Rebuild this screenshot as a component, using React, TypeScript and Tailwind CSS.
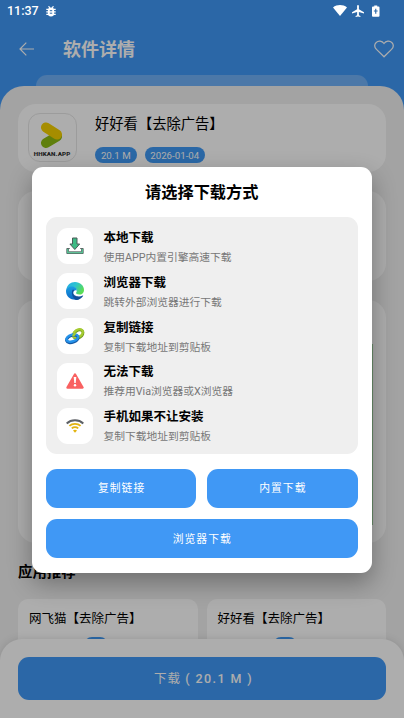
import React from "react";

const cjk = "font-['Roboto','Noto_Sans_CJK_SC',sans-serif]";

function DownloadIcon() {
  return (
    <svg viewBox="0 0 18 18" className="size-[18px]">
      <path d="M6.500 1h4.500v6h2.700L8.800 12.500 3.900 7h2.600z" fill="#3dba84" stroke="#4c5a58" strokeWidth="1" />
      <path d="M.8 11.500h3M.8 11.500v5h16.400v-5h-3M2.400 12v2.800h13.200V12" fill="none" stroke="#4c5a58" strokeWidth=".9" />
      <path d="M1.700 12v3.700h14.600V12" fill="none" stroke="#3dba84" strokeWidth="1.100" />
    </svg>
  );
}

function EdgeIcon() {
  return (
    <svg viewBox="0 0 24 24" className="size-[18px]">
      <defs>
        <linearGradient id="edgeTop" x1="0" x2="1" y1="0" y2=".5">
          <stop offset="0" stopColor="#25a9e4" />
          <stop offset=".5" stopColor="#2bc3d2" />
          <stop offset="1" stopColor="#5bdd55" />
        </linearGradient>
        <linearGradient id="edgeLeft" x1="0" x2="0" y1="0" y2="1">
          <stop offset="0" stopColor="#1b9de2" />
          <stop offset="1" stopColor="#0b68c5" />
        </linearGradient>
      </defs>
      <path d="M.3 10.5C1.400 4 6 0 12 0c7 0 12 5 12 10.500 0 4-3 6.300-6.200 6.300-3 0-4.400-1.100-4.400-2 0-.8 1-1.200 1-3 0-2.700-2.700-5-6-5-3.500 0-6.300 1.300-8.100 3.700z" fill="url(#edgeTop)" />
      <path d="M0 12c0-3.500 3.500-6 8-6 4.500 0 6.600 3.200 6.500 5.500-2-1.300-4.900.2-5 3.500-.1 4 3.800 7.200 7.500 8C9 25.500 0 21 0 12z" fill="url(#edgeLeft)" />
      <path d="M8.600 10.500c-2.300 5.500 1 11.500 5 13.400 4 0 7.400-2.400 9.200-5.400.2-.5-.2-.7-.6-.5-5 2.600-12.500.8-12.700-4 0-1.600.8-2.500 1.800-3.200-.8-.5-1.800-.8-2.700-.3z" fill="#124f9c" />
    </svg>
  );
}

function ChainIcon() {
  return (
    <svg viewBox="0 0 20 20" className="size-5" fill="none">
      <ellipse cx="13.200" cy="8.200" rx="5.300" ry="3.600" transform="rotate(-35 13.200 8.200)" stroke="#719b20" strokeWidth="2.800" />
      <ellipse cx="13" cy="7.400" rx="5.300" ry="3.600" transform="rotate(-35 13 7.400)" stroke="#a5cb30" strokeWidth="2.400" />
      <ellipse cx="7.300" cy="13" rx="6" ry="3.400" transform="rotate(-18 7.300 13)" stroke="#1459a5" strokeWidth="2.800" />
      <ellipse cx="7.300" cy="12" rx="6" ry="3.400" transform="rotate(-18 7.300 12)" stroke="#2492ea" strokeWidth="2.400" />
      <path d="M8.200 10.500q.2-2 2.300-3.500" stroke="#a5cb30" strokeWidth="2.400" />
    </svg>
  );
}

function WarningIcon() {
  return (
    <svg viewBox="0 0 18 18" className="size-[18px]">
      <path d="M9 2.500l7.500 13H1.500z" fill="#f96161" stroke="#f96161" strokeWidth="2.400" strokeLinejoin="round" />
      <path d="M7.700 5h2.600l-.6 6H8.300z" fill="#fff" />
      <circle cx="9" cy="13.300" r="1.200" fill="#fff" />
    </svg>
  );
}

function WifiIcon() {
  return (
    <svg viewBox="0 0 18 18" className="size-[18px]" fill="none">
      <path d="M.7 6.400C5.200 2.300 12.800 2.300 17.300 6.400" stroke="#5c6065" strokeWidth="2" />
      <path d="M3.400 8.900c3-2.700 8.200-2.700 11.200 0M5.800 11.400c1.800-1.600 4.600-1.600 6.400 0" stroke="#e3b410" strokeWidth="1.900" />
      <path d="M7 13.500c1.200-.9 2.800-.9 4 0l-2 2.200z" fill="#e3b410" />
    </svg>
  );
}

const options = [
  { title: "本地下载", note: "使用APP内置引擎高速下载", icon: <DownloadIcon /> },
  { title: "浏览器下载", note: "跳转外部浏览器进行下载", icon: <EdgeIcon /> },
  { title: "复制链接", note: "复制下载地址到剪贴板", icon: <ChainIcon /> },
  { title: "无法下载", note: "推荐用Via浏览器或X浏览器", icon: <WarningIcon /> },
  { title: "手机如果不让安装", note: "复制下载地址到剪贴板", icon: <WifiIcon /> },
];

function StatusBar() {
  return (
    <div className="absolute inset-x-0 top-0 flex h-[22px] items-center text-white">
      <span className="ml-[7px] mt-px w-[33px] text-[12.500px] font-medium leading-none">11:37</span>
      <svg viewBox="0 0 10 11" className="ml-[5.500px] h-[11px] w-[10px]">
        <path d="M2.500 .3L4 1.800M7.500 .3L6 1.800M.3 3.400h9.400M.3 5.900h9.400M.3 8.400h9.400" stroke="#fff" strokeWidth="1.200" />
        <rect x="1.900" y="1.400" width="6.200" height="9.200" rx="3" fill="#fff" />
        <path d="M3.800 4.700h2.400M3.800 7.200h2.400" stroke="#2c68a8" strokeWidth="1" />
      </svg>
      <div className="-mt-px ml-auto mr-[23.500px] flex items-center">
        <svg viewBox="0 0 14 11" className="h-[11px] w-[14px]">
          <path d="M0 2.400C4-.8 10-.8 14 2.400L7 11z" fill="#fff" />
        </svg>
        <svg viewBox="2 2 20 20" className="ml-[5px] size-[12px]">
          <path fill="#fff" d="M22 16v-2l-8.500-5V3.500a1.500 1.500 0 0 0-3 0V9L2 14v2l8.500-2.500V19L8 20.500V22l4-1 4 1v-1.500L13.500 19v-5.500z" />
        </svg>
        <svg viewBox="0 0 8 12" className="ml-[8px] mr-[1px] h-[12px] w-[7.500px]">
          <path d="M2.400 0h3.200v1.200H7q1 0 1 1V11q0 1-1 1H1q-1 0-1-1V2.200q0-1 1-1h1.400z" fill="#fff" />
          <path d="M4 3.500v5.500M2 6h4" stroke="#2c68a8" strokeWidth="1.200" />
        </svg>
      </div>
    </div>
  );
}

function Pill({ children, className }: { children: React.ReactNode; className: string }) {
  return (
    <span className={`flex h-4 items-center justify-center rounded-full bg-[#409af5] pt-px text-[9.700px] leading-none text-white ${className}`}>
      {children}
    </span>
  );
}

function AppLogo() {
  return (
    <div className="flex size-[49px] flex-col items-center rounded-[12px] border border-[#e6e6e6] pt-[7px]">
      <svg viewBox="0 0 24 28" className="h-[28px] w-[24px]">
        <path d="M6 22l11-6.500" stroke="#8dbb12" strokeWidth="10" strokeLinecap="round" />
        <path d="M6 6.500l11 7" stroke="#f5d000" strokeWidth="10" strokeLinecap="round" />
      </svg>
      <span className="mt-px whitespace-nowrap text-[6.200px] font-black leading-[8px] tracking-[0.150px] text-[#333]">HHKAN.APP</span>
    </div>
  );
}

function Recommendation({ name }: { name: string }) {
  return (
    <div className="h-[90px] rounded-[10px] bg-white px-[11px] pt-[11px]">
      <div className="text-[12.500px] leading-[17px] text-black">{name}</div>
      <div className="ml-[55px] mt-[9.500px] h-4 w-[24px] rounded-full bg-[#409af5]" />
    </div>
  );
}

function ActionButton({ children, className }: { children: React.ReactNode; className: string }) {
  return (
    <button className={`flex h-[39px] items-center justify-center rounded-[11px] bg-[#4098f5] pl-px pt-[3px] text-[10.800px] tracking-[1px] text-white ${className}`}>
      {children}
    </button>
  );
}

export default function App() {
  return (
    <div className={`relative h-[718px] w-[404px] overflow-hidden bg-[#4099f7] ${cjk}`}>
      <div className="flex h-full flex-col">
        <header className="flex h-[75px] items-start pt-[37px] text-white">
          <svg viewBox="0 0 16 14" className="ml-[19px] mt-[4.500px] h-[14px] w-[16px]" fill="none" stroke="currentColor" strokeWidth="1.200">
            <path d="M15 7H1M7.300 .7L1 7l6.300 6.300" />
          </svg>
          <h1 className="ml-[28px] mt-px text-[18px] font-bold leading-[24px]">软件详情</h1>
          <svg viewBox="0 0 20 18" className="ml-auto mr-[10px] mt-[2.500px] h-[18px] w-[20px]" fill="none" stroke="currentColor" strokeWidth="1.200">
            <path d="M10 16.800L2.500 9.400C.3 7 .4 4.300 2.200 2.500 4.400.4 8 .8 10 3.500c2-2.700 5.600-3.100 7.800-1 1.800 1.800 1.900 4.500-.3 6.900z" />
          </svg>
        </header>
        <div className="mx-[36px] h-[11px] shrink-0 rounded-t-[18px] bg-[#70b1f8]" />
        <main className="flex min-h-0 flex-1 flex-col overflow-hidden rounded-t-[24px] bg-[#f0f0f0] px-[18px] pt-[18px]">
          <section className="flex h-[68px] shrink-0 rounded-[18px] bg-white pl-[9.500px] pt-[9px]">
            <AppLogo />
            <div className="ml-[18.500px] pt-[2px]">
              <div className="text-[14.300px] leading-[18px] text-black">好好看【去除广告】</div>
              <div className="mt-[14px] flex gap-[8.500px]">
                <Pill className="w-[41.500px]">20.1 M</Pill>
                <Pill className="w-[59.500px]">2026-01-04</Pill>
              </div>
            </div>
          </section>
          <section className="mt-[19px] h-[90px] shrink-0 rounded-[18px] bg-white" />
          <section className="mt-[19px] h-[243px] shrink-0 rounded-[18px] bg-white pl-[14px] pr-[13px] pt-[44px]">
            <div className="h-[181px] bg-[#9ccf9c]" />
          </section>
          <h2 className="mt-[19px] shrink-0 text-[14.400px] font-bold leading-[22px] text-black">应用推荐</h2>
          <section className="mt-[15px] grid shrink-0 grid-cols-2 gap-[9px]">
            <Recommendation name="网飞猫【去除广告】" />
            <Recommendation name="好好看【去除广告】" />
          </section>
        </main>
      </div>

      <footer className="absolute inset-x-0 bottom-0 h-[79px] rounded-t-[22px] bg-white px-[18px] pt-[18px] shadow-[0_0_8px_rgba(0,0,0,0.12)]">
        <button className="flex h-[43px] w-full items-center justify-center rounded-[11px] bg-[#4099f7] pl-[3px] pt-[2px] text-[12.500px] text-white">
          <span className="tracking-[1.200px]">下载</span>
          <span className="ml-[4px] whitespace-pre font-medium tracking-[1.400px]">( 20.1 M )</span>
        </button>
      </footer>

      <div className="absolute inset-0 bg-black/32" />
      <StatusBar />

      <div className="absolute left-[31.500px] top-[166.500px] w-[340.500px] rounded-[11px] bg-white px-[14.500px] pb-[14.500px] shadow-[0_10px_24px_rgba(0,0,0,0.32)]">
        <h2 className="pt-[13px] text-center text-[16.200px] font-bold leading-[25px] text-black">请选择下载方式</h2>
        <div className="mt-[12.500px] flex h-[237px] flex-col gap-[8.900px] rounded-[11px] bg-[#efefef] pl-[10.500px] pt-[11px]">
          {options.map((o) => (
            <div key={o.title} className="flex h-9 shrink-0 items-center">
              <div className="flex size-9 items-center justify-center rounded-[11px] bg-white">{o.icon}</div>
              <div className="ml-[11px] mt-[1.500px]">
                <div className="text-[12.500px] font-bold leading-[17px] text-black">{o.title}</div>
                <div className="mt-[5px] text-[10.750px] leading-[14px] text-[#777]">{o.note}</div>
              </div>
            </div>
          ))}
        </div>
        <div className="mt-[14.500px] grid grid-cols-2 gap-x-[11px] gap-y-[11.500px]">
          <ActionButton className="">复制链接</ActionButton>
          <ActionButton className="">内置下载</ActionButton>
          <ActionButton className="col-span-2">浏览器下载</ActionButton>
        </div>
      </div>
    </div>
  );
}
